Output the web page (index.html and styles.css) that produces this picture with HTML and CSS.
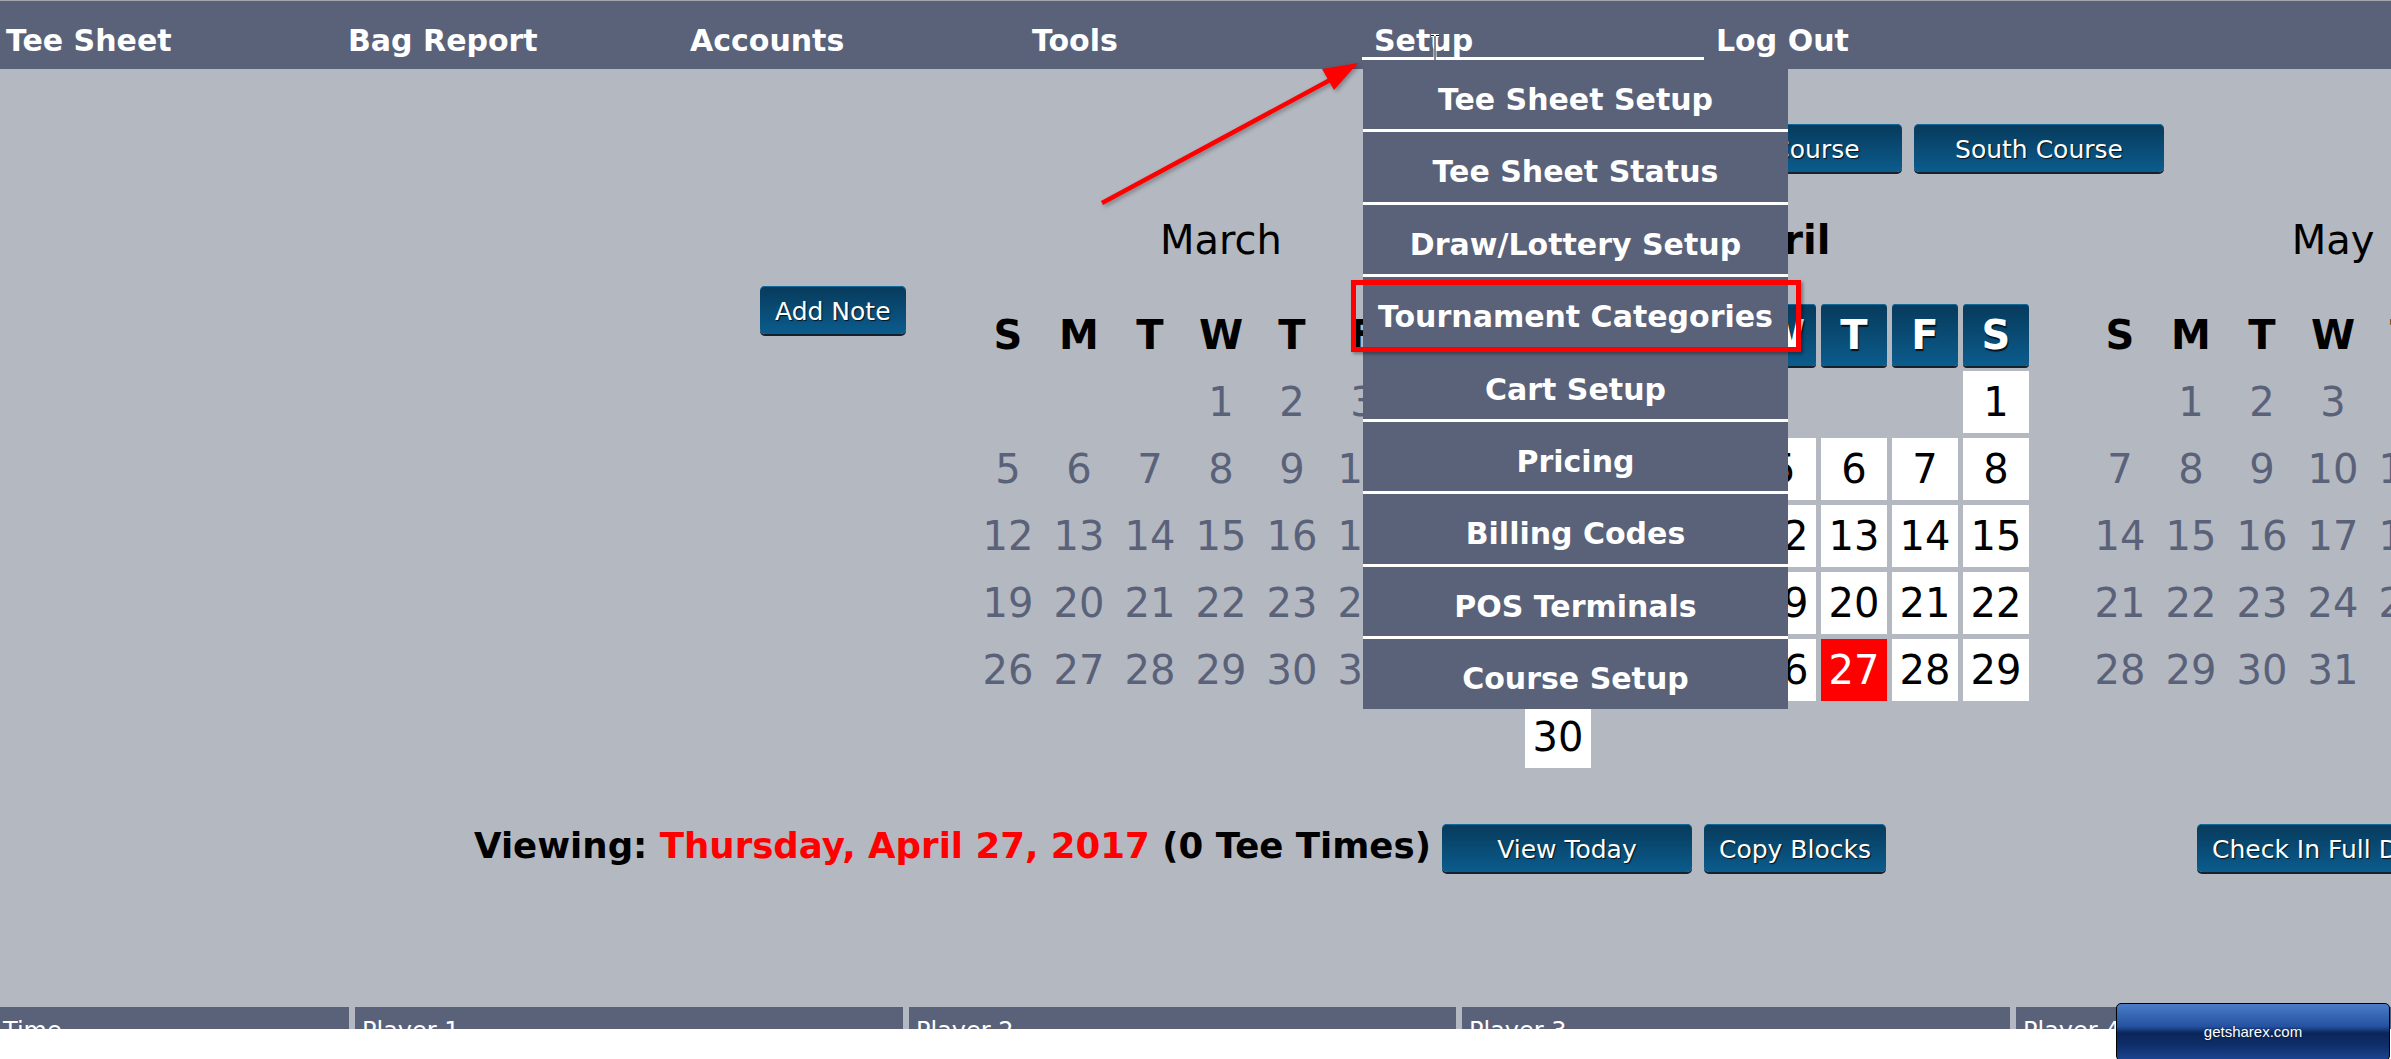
FILE: index.html
```html
<!DOCTYPE html>
<html lang="en">
<head>
<meta charset="utf-8">
<title>Tee Sheet</title>
<link rel="stylesheet" href="styles.css">
</head>
<body>
<div class="page">
  <header class="topbar">
    <ul class="nav">
      <li class="nav-item">Tee Sheet</li>
      <li class="nav-item">Bag Report</li>
      <li class="nav-item">Accounts</li>
      <li class="nav-item">Tools</li>
      <li class="nav-item nav-item--open">Setup
        <svg class="ibeam" width="14" height="36" viewBox="0 0 14 36">
          <path d="M3 1.5H6M8 1.5H11M7 2V32" stroke="#fff" stroke-width="3" fill="none"/>
          <path d="M3 1.5H6M8 1.5H11M7 2V32" stroke="#111" stroke-width="1" fill="none"/>
          <path d="M1 33.5H13" stroke="#8f8a78" stroke-width="2" fill="none"/>
        </svg>
        <ul class="dropdown">
          <li>Tee Sheet Setup</li>
          <li>Tee Sheet Status</li>
          <li>Draw/Lottery Setup</li>
          <li>Tournament Categories</li>
          <li>Cart Setup</li>
          <li>Pricing</li>
          <li>Billing Codes</li>
          <li>POS Terminals</li>
          <li>Course Setup</li>
        </ul>
      </li>
      <li class="nav-item">Log Out</li>
    </ul>
  </header>

  <main class="main">
    <div class="top-area">
      <aside class="notes">
        <button class="btn">Add Note</button>
      </aside>
      <section class="cal-area">
        <div class="courses">
          <button class="btn btn--wide">North Course</button>
          <button class="btn btn--wide">South Course</button>
        </div>
        <div class="months">
          <div class="month">
            <div class="month-title">March</div>
            <div class="cal">
              <div class="wd">S</div><div class="wd">M</div><div class="wd">T</div><div class="wd">W</div><div class="wd">T</div><div class="wd">F</div><div class="wd">S</div>
              <div></div><div></div><div></div><div>1</div><div>2</div><div>3</div><div>4</div>
              <div>5</div><div>6</div><div>7</div><div>8</div><div>9</div><div>10</div><div>11</div>
              <div>12</div><div>13</div><div>14</div><div>15</div><div>16</div><div>17</div><div>18</div>
              <div>19</div><div>20</div><div>21</div><div>22</div><div>23</div><div>24</div><div>25</div>
              <div>26</div><div>27</div><div>28</div><div>29</div><div>30</div><div>31</div>
            </div>
          </div>
          <div class="month month--current">
            <div class="month-title">April</div>
            <div class="cal cal--current">
              <div class="wd">S</div><div class="wd">M</div><div class="wd">T</div><div class="wd">W</div><div class="wd">T</div><div class="wd">F</div><div class="wd">S</div>
              <div></div><div></div><div></div><div></div><div></div><div></div><div class="day">1</div>
              <div class="day">2</div><div class="day">3</div><div class="day">4</div><div class="day">5</div><div class="day">6</div><div class="day">7</div><div class="day">8</div>
              <div class="day">9</div><div class="day">10</div><div class="day">11</div><div class="day">12</div><div class="day">13</div><div class="day">14</div><div class="day">15</div>
              <div class="day">16</div><div class="day">17</div><div class="day">18</div><div class="day">19</div><div class="day">20</div><div class="day">21</div><div class="day">22</div>
              <div class="day">23</div><div class="day">24</div><div class="day">25</div><div class="day">26</div><div class="day day--selected">27</div><div class="day">28</div><div class="day">29</div>
              <div class="day">30</div>
            </div>
          </div>
          <div class="month">
            <div class="month-title">May</div>
            <div class="cal">
              <div class="wd">S</div><div class="wd">M</div><div class="wd">T</div><div class="wd">W</div><div class="wd">T</div><div class="wd">F</div><div class="wd">S</div>
              <div></div><div>1</div><div>2</div><div>3</div><div>4</div><div>5</div><div>6</div>
              <div>7</div><div>8</div><div>9</div><div>10</div><div>11</div><div>12</div><div>13</div>
              <div>14</div><div>15</div><div>16</div><div>17</div><div>18</div><div>19</div><div>20</div>
              <div>21</div><div>22</div><div>23</div><div>24</div><div>25</div><div>26</div><div>27</div>
              <div>28</div><div>29</div><div>30</div><div>31</div>
            </div>
          </div>
        </div>
      </section>
    </div>

    <div class="viewing-row">
      <span class="viewing">Viewing: <span class="viewing-date">Thursday, April 27, 2017</span> (0 Tee Times)</span>
      <button class="btn btn--wide btn--today">View Today</button>
      <button class="btn btn--copy">Copy Blocks</button>
      <button class="btn btn--checkin">Check In Full Day</button>
    </div>

    <div class="tee-table">
      <div class="th th--time">Time</div>
      <div class="th">Player 1</div>
      <div class="th">Player 2</div>
      <div class="th">Player 3</div>
      <div class="th">Player 4</div>
    </div>
  </main>

  <div class="mark-box"></div>
  <svg class="mark-arrow" width="290" height="170" viewBox="0 0 290 170">
    <line x1="12" y1="148" x2="240" y2="25" stroke="#ff0000" stroke-width="4.5" stroke-linecap="butt"/>
    <polygon points="268,8 244,35 232,14" fill="#ff0000"/>
  </svg>
</div>
<div class="sharex">getsharex.com</div>
</body>
</html>
```

FILE: styles.css
```css
html, body {
  margin: 0;
  padding: 0;
  overflow: hidden;
  background: #ffffff;
}

body {
  position: relative;
  width: 2391px;
  height: 1059px;
  font-family: "DejaVu Sans", Verdana, sans-serif;
}

.page {
  position: relative;
  height: 1029px;
  overflow: hidden;
  background: #b4b8c1;
}

/* ---------- top navigation ---------- */
.topbar {
  height: 68px;
  background: #5a6279;
  border-top: 1px solid #a3a6ae;
}

.nav {
  list-style: none;
  margin: 0 0 0 -6px;
  padding: 0;
  display: flex;
}

.nav-item {
  position: relative;
  flex: none;
  width: 330px;
  padding: 24px 0 0 12px;
  line-height: 32px;
  border-bottom: 3px solid transparent;
  color: #ffffff;
  font-weight: bold;
  font-size: 30px;
  white-space: nowrap;
}

.nav-item--open {
  border-bottom-color: #ffffff;
}

.ibeam {
  position: absolute;
  left: 66px;
  top: 33px;
}

.dropdown {
  position: absolute;
  left: 1px;
  top: calc(100% + 3px);
  z-index: 10;
  width: 425px;
  margin: 0;
  padding: 0;
  list-style: none;
  background: #5a6279;
}

.dropdown li {
  height: 60.4px;
  padding-top: 9px;
  line-height: 61px;
  text-align: center;
  border-bottom: 3px solid #ffffff;
  font-size: 30px;
  font-weight: bold;
  color: #ffffff;
  overflow: hidden;
}

.dropdown li:last-child {
  border-bottom: none;
}

/* ---------- buttons ---------- */
.btn {
  display: block;
  flex: none;
  box-sizing: border-box;
  height: 48px;
  margin: 0;
  padding: 0 15px;
  border: none;
  border-radius: 5px;
  background: linear-gradient(#073a5b, #0b5c8d);
  box-shadow: 0 2px 0 #17212c, inset 0 1px 0 #11699b;
  color: #ffffff;
  font-family: "DejaVu Sans", Verdana, sans-serif;
  font-size: 25px;
  line-height: 52px;
  text-align: center;
  text-shadow: 1px 1px 1px #04121c;
  white-space: nowrap;
  overflow: hidden;
}

.btn--wide {
  width: 250px;
}

/* ---------- main area ---------- */
.top-area {
  display: flex;
  padding-top: 55px;
}

.notes {
  flex: none;
  width: 975px;
  box-sizing: border-box;
  padding: 162px 0 0 760px;
}

.cal-area {
  flex: none;
  width: 1604px;
}

.courses {
  display: flex;
  gap: 12px;
  padding-left: 677px;
}

.months {
  display: flex;
  gap: 58px;
  margin-top: 44px;
}

.month {
  flex: none;
}

.month-title {
  height: 48px;
  margin-bottom: 40px;
  line-height: 48px;
  text-align: center;
  font-size: 40px;
  color: #000000;
}

.month--current .month-title {
  font-weight: bold;
}

.cal {
  display: grid;
  grid-template-columns: repeat(7, 66px);
  grid-auto-rows: 62px;
  gap: 5px;
}

.cal--current {
  grid-template-columns: 78px repeat(6, 66px);
}

.cal > div {
  width: 66px;
  line-height: 62px;
  text-align: center;
  font-size: 40px;
  color: #5a6279;
}

.cal > .wd {
  font-weight: bold;
  color: #000000;
}

.cal--current > .wd {
  color: #ffffff;
  border-radius: 4px;
  background: linear-gradient(#073a5b, #0b5c8d);
  box-shadow: 0 2px 0 #17212c, inset 0 1px 0 #11699b;
  text-shadow: 1px 2px 1px #04121c;
}

.cal > .day {
  background: #ffffff;
  color: #000000;
}

.cal > .day--selected {
  background: #ff0000;
  color: #ffffff;
}

/* ---------- viewing row ---------- */
.viewing-row {
  display: flex;
  align-items: baseline;
  margin-top: 56px;
  padding-left: 474px;
}

.viewing {
  flex: none;
  font-size: 35.6px;
  font-weight: bold;
  color: #000000;
  white-space: nowrap;
}

.viewing-date {
  color: #ff0000;
}

.btn--today {
  margin-left: 11px;
}

.btn--copy {
  margin-left: 12px;
}

.btn--checkin {
  margin-left: 311px;
}

/* ---------- tee sheet table header ---------- */
.tee-table {
  display: grid;
  grid-template-columns: 349px 548px 547px 548px 548px;
  column-gap: 6px;
  margin-top: 135px;
}

.th {
  height: 60px;
  box-sizing: border-box;
  padding: 10px 7px;
  background: #5a6279;
  color: #ffffff;
  font-size: 24px;
  white-space: nowrap;
}

.th--time {
  padding-left: 3px;
}

/* ---------- annotations ---------- */
.mark-box {
  position: absolute;
  left: 1351px;
  top: 280px;
  z-index: 20;
  width: 450px;
  height: 72px;
  box-sizing: border-box;
  border: 5px solid #ff0000;
  box-shadow: 2px 2px 3px rgba(0, 0, 0, 0.35);
}

.mark-arrow {
  position: absolute;
  left: 1090px;
  top: 55px;
  z-index: 20;
  filter: drop-shadow(2px 2px 2px rgba(0, 0, 0, 0.3));
}

.sharex {
  position: absolute;
  left: 2116px;
  top: 1003px;
  width: 272px;
  height: 56px;
  line-height: 56px;
  border: 1px solid #000000;
  border-radius: 5px;
  background: linear-gradient(#4a7cc7 0%, #2452a0 40%, #0b2558 52%, #0f2f6c 75%, #1d4590 100%);
  color: #ffffff;
  font-family: "Liberation Sans", Arial, sans-serif;
  font-size: 15px;
  text-align: center;
  text-shadow: 0 0 2px #06183c;
}
```
